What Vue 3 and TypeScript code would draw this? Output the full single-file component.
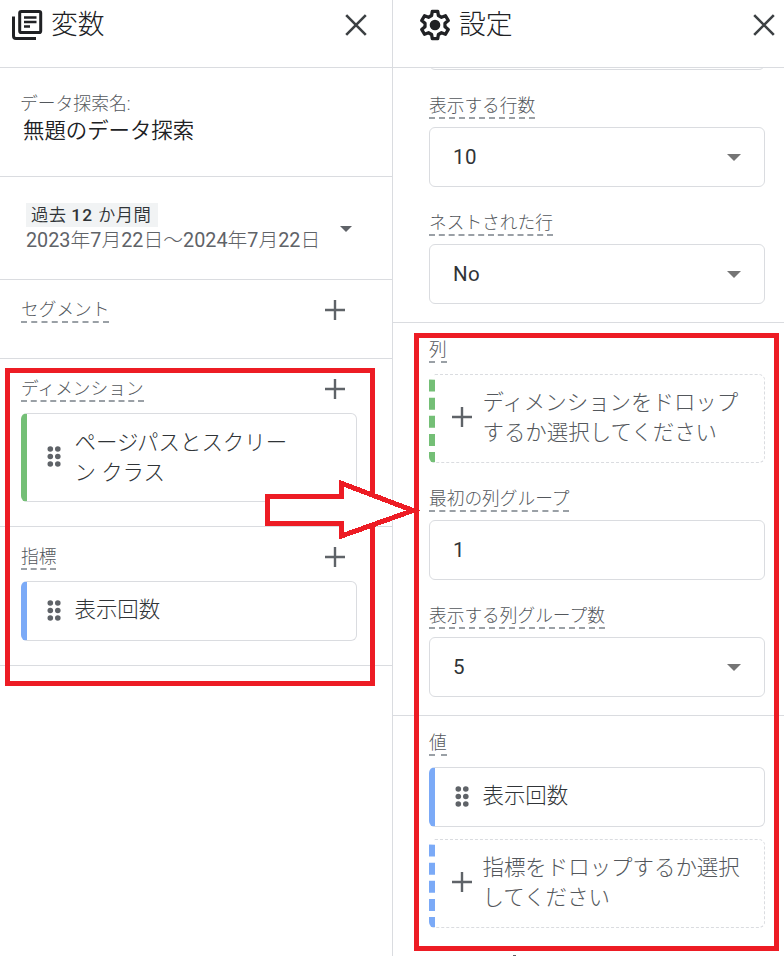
<script setup lang="ts">
interface Chip {
  lines: string[]
}
interface Section {
  label: string
  tone: string
  chips: Chip[]
}

const variableSections: Section[] = [
  { label: 'セグメント', tone: 'none', chips: [] },
  { label: 'ディメンション', tone: 'green', chips: [{ lines: ['ページパスとスクリー', 'ン クラス'] }] },
  { label: '指標', tone: 'blue', chips: [{ lines: ['表示回数'] }] },
]
const rangeParts: string[] = '2023年7月22日～2024年7月22日'.split(/(\d+)/).filter(Boolean)
const dots: number[][] = [
  [3.3, 3], [10.8, 3], [3.3, 10.5], [10.8, 10.5], [3.3, 18], [10.8, 18],
]
</script>

<template>
  <main class="app">
    <section class="panel variables">
      <header class="head">
        <svg class="head-icon" viewBox="0 0 32 32" fill="none" stroke="#202124">
          <rect x="8.7" y="2.5" width="21" height="21" rx="1.6" stroke-width="3" />
          <path d="M2.5 7.5V27q0 2.5 2.5 2.5H25" stroke-width="3" />
          <path d="M13 8.6h12.5M13 13.1h12.5M13 17.6h6" stroke-width="2.5" />
        </svg>
        <h1>変数</h1>
        <svg class="close" viewBox="0 0 22 22"><path d="M1.2 1.2 20.8 20.8M20.8 1.2 1.2 20.8" /></svg>
      </header>

      <div class="name-block">
        <div class="caption">データ探索名:</div>
        <div class="name">無題のデータ探索</div>
      </div>

      <div class="date-block">
        <div>
          <div class="preset">過去 <b>12</b> か月間</div>
          <div class="range"><span v-for="(p, i) in rangeParts" :key="i" :class="{ digits: /\d/.test(p) }">{{ p }}</span></div>
        </div>
        <svg class="date-caret" viewBox="0 0 12 6"><path d="M0 0h12L6 6z" /></svg>
      </div>

      <div v-for="s in variableSections" :key="s.label" class="var-section">
        <div class="var-head">
          <span class="label">{{ s.label }}</span>
          <svg class="plus" viewBox="0 0 22 22"><path d="M11 1v20M1 11h20" /></svg>
        </div>
        <div v-for="(c, i) in s.chips" :key="i" class="chip" :class="s.tone">
          <svg class="grip" viewBox="0 0 14 21"><circle v-for="(d, k) in dots" :key="k" :cx="d[0]" :cy="d[1]" r="2.8" /></svg>
          <div class="chip-text"><div v-for="l in c.lines" :key="l">{{ l }}</div></div>
        </div>
      </div>
    </section>

    <section class="panel settings">
      <header class="head">
        <svg class="head-icon gear" viewBox="0 0 32 32">
          <path d="M13.3 2.3h5.4l.7 4.2 3.1 1.8 4-1.5 2.8 4.7-3.3 2.8v3.400l3.300 2.800-2.800 4.700-4-1.500-3.100 1.800-.7 4.200h-5.400l-.7-4.200-3.100-1.800-4 1.500-2.800-4.700L6 17.700v-3.400l-3.300-2.800 2.800-4.700 4 1.500 3.100-1.800z" fill="none" stroke="#202124" stroke-width="3.3" stroke-linejoin="round" />
          <circle cx="16" cy="16" r="5.3" fill="#202124" />
        </svg>
        <h1>設定</h1>
        <svg class="close" viewBox="0 0 22 22"><path d="M1.2 1.2 20.8 20.8M20.8 1.2 1.2 20.8" /></svg>
      </header>

      <div class="scroll">
        <div class="group rows">
          <div class="box previous"></div>
          <div class="label-row"><span class="label">表示する行数</span></div>
          <div class="box"><span>10</span><svg class="caret" viewBox="0 0 14 7"><path d="M0 0h14L7 7z" /></svg></div>
          <div class="label-row"><span class="label">ネストされた行</span></div>
          <div class="box"><span>No</span><svg class="caret" viewBox="0 0 14 7"><path d="M0 0h14L7 7z" /></svg></div>
        </div>

        <div class="group columns">
          <div class="label-row first"><span class="label">列</span></div>
          <div class="drop green">
            <svg class="plus" viewBox="0 0 22 22"><path d="M11 1v20M1 11h20" /></svg>
            <div class="chip-text"><div>ディメンションをドロップ</div><div>するか選択してください</div></div>
          </div>
          <div class="label-row"><span class="label">最初の列グループ</span></div>
          <div class="box"><span>1</span></div>
          <div class="label-row"><span class="label">表示する列グループ数</span></div>
          <div class="box"><span>5</span><svg class="caret" viewBox="0 0 14 7"><path d="M0 0h14L7 7z" /></svg></div>
        </div>

        <div class="group values">
          <div class="label-row first"><span class="label">値</span></div>
          <div class="chip blue">
            <svg class="grip" viewBox="0 0 14 21"><circle v-for="(d, k) in dots" :key="k" :cx="d[0]" :cy="d[1]" r="2.8" /></svg>
            <div class="chip-text"><div>表示回数</div></div>
          </div>
          <div class="drop blue">
            <svg class="plus" viewBox="0 0 22 22"><path d="M11 1v20M1 11h20" /></svg>
            <div class="chip-text"><div>指標をドロップするか選択</div><div>してください</div></div>
          </div>
        </div>
        <div class="next-edge"></div>
      </div>
    </section>

    <svg class="marks" viewBox="0 0 784 956" fill="none" stroke="#ed1c24" stroke-width="5" shape-rendering="crispEdges">
      <rect x="7.5" y="370.5" width="365" height="313" />
      <path d="M267.5 496.5H341.5V483.3L413 510.5 341.5 536V523.5H267.5z" fill="#fff" />
      <rect x="416.5" y="335.5" width="360" height="613" />
    </svg>
  </main>
</template>

<style>
body {
  margin: 0;
  background: #fff;
}
</style>

<style scoped>
.app {
  position: relative;
  display: flex;
  width: 784px;
  height: 956px;
  overflow: hidden;
  background: #fff;
  color: #303437;
  font-family: Roboto, "Noto Sans CJK JP", sans-serif;
  font-weight: 300;
}
.app * {
  box-sizing: border-box;
}
svg {
  display: block;
  flex: none;
}
.panel {
  flex: none;
  height: 956px;
}
.variables {
  width: 392px;
}
.settings {
  display: flex;
  flex-direction: column;
  width: 392px;
  border-left: 1px solid #dadce0;
}
.head {
  flex: none;
  display: flex;
  align-items: center;
  height: 68px;
  padding: 0 25px 18px 11px;
  border-bottom: 1px solid #dadce0;
}
.settings .head {
  padding: 0 9px 18px 26px;
}
.head-icon {
  width: 32px;
  height: 32px;
}
h1 {
  flex: 1;
  margin: 0 0 0 8px;
  font-size: 26.8px;
  font-weight: 300;
  line-height: 40px;
  color: #202124;
  white-space: nowrap;
}
.close {
  width: 22px;
  height: 22px;
}
.close path {
  stroke: #3c4043;
  stroke-width: 2.6;
}
.name-block {
  height: 109px;
  padding: 23px 20px 0;
  border-bottom: 1px solid #dadce0;
}
.caption {
  font-size: 17.8px;
  line-height: 26px;
  color: #53575c;
}
.name {
  padding-left: 3px;
  font-size: 21.4px;
  font-weight: 350;
  line-height: 27px;
  color: #202124;
}
.date-block {
  display: flex;
  height: 103px;
  padding: 26px 0 0 26px;
  border-bottom: 1px solid #dadce0;
}
.preset {
  width: 132px;
  height: 24px;
  padding-left: 5px;
  background: #f1f3f4;
  font-size: 17.3px;
  font-weight: 350;
  line-height: 24px;
  letter-spacing: 0.5px;
  white-space: nowrap;
}
.preset b {
  font-weight: 500;
  letter-spacing: 1.2px;
}
.range {
  width: 314px;
  font-size: 19.8px;
  line-height: 27px;
  color: #5f6368;
  white-space: nowrap;
}
.digits {
  font-weight: 400;
}
.date-caret {
  width: 12px;
  height: 6px;
  margin-top: 23px;
  fill: #5f6368;
}
.var-section {
  padding: 0 35px 24px 21px;
  border-bottom: 1px solid #dadce0;
}
.var-head {
  display: flex;
  justify-content: space-between;
  align-items: flex-start;
  height: 54px;
  padding: 17px 11px 0 0;
}
.label {
  display: inline-block;
  height: 26px;
  border-bottom: 2px dashed #9aa0a6;
  font-size: 17.7px;
  line-height: 26px;
  color: #53575c;
  white-space: nowrap;
}
.plus {
  width: 22px;
  height: 22px;
}
.plus path {
  stroke: #5f6368;
  stroke-width: 2.4;
}
.var-head .plus {
  margin-top: 2px;
}
.chip,
.drop {
  display: flex;
  align-items: center;
  width: 336px;
  border: 1px solid #dadce0;
  border-left-width: 6px;
  border-radius: 6px;
  padding: 14px 0 14px 20px;
}
.chip.green,
.drop.green {
  border-left-color: #74bf76;
}
.chip.blue,
.drop.blue {
  border-left-color: #7baaf7;
}
.drop {
  height: 89px;
  padding-left: 16px;
  border-style: dashed;
  color: #53575c;
}
.chip {
  height: 60px;
}
.var-section .chip.green {
  height: 89px;
}
.grip {
  width: 14px;
  height: 21px;
  margin-top: -2px;
  fill: #5f6368;
}
.drop .plus {
  margin-top: -4px;
}
.chip-text {
  margin: -2px 0 0 13.5px;
  font-size: 21.45px;
  line-height: 30px;
  white-space: nowrap;
}
.chip.green .chip-text {
  margin-top: 0;
}
.drop .chip-text {
  margin: -2px 0 0 9.5px;
}
.scroll {
  flex: 1;
  min-height: 0;
  overflow: hidden;
}
.group {
  display: flow-root;
  padding-left: 36px;
  border-bottom: 1px solid #dadce0;
}
.rows {
  height: 255px;
}
.columns {
  height: 393px;
}
.values {
  height: 239px;
  border-bottom: 0;
}
.box {
  display: flex;
  align-items: center;
  justify-content: space-between;
  width: 336px;
  height: 60px;
  padding: 0 23px;
  border: 1px solid #dadce0;
  border-radius: 6px;
  font-size: 20.5px;
  font-weight: 400;
  letter-spacing: 0.4px;
}
.previous {
  margin-top: -58px;
}
.label-row {
  display: flex;
  align-items: flex-end;
  height: 57px;
  padding-bottom: 8px;
}
.label-row.first {
  height: 51px;
  padding-bottom: 11px;
}
.caret {
  width: 14px;
  height: 7px;
  fill: #757575;
}
.values .drop {
  margin-top: 12px;
}
.next-edge {
  width: 3px;
  height: 1px;
  margin-left: 120px;
  background: #5f6368;
}
.marks {
  position: absolute;
  inset: 0;
  width: 784px;
  height: 956px;
}
</style>
